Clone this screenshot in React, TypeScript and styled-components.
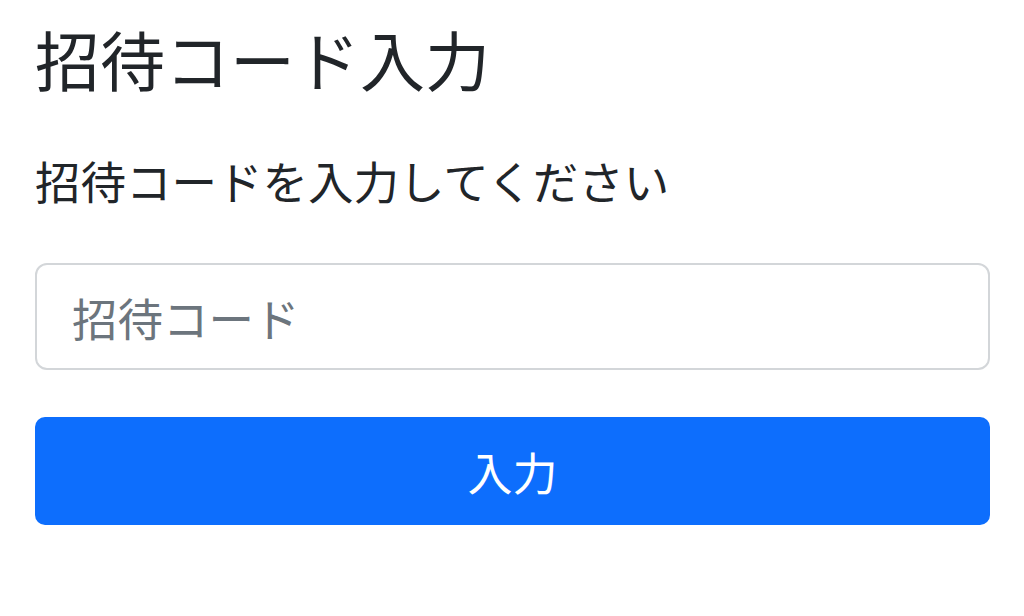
import React from "react";
import styled, { createGlobalStyle } from "styled-components";

const GlobalStyle = createGlobalStyle`
    body {
        margin: 0;
        background: #ffffff;
        font-family: "Noto Sans CJK JP", "Noto Sans", sans-serif;
        color: #212529;
    }
`

export default function App() {
    return (
        <>
            <GlobalStyle />
            <Page>
                <Title>招待コード入力</Title>
                <Lead>招待コードを入力してください</Lead>
                <CodeInput type="text" placeholder="招待コード" />
                <SubmitButton type="button">入力</SubmitButton>
            </Page>
        </>
    )
}

const Page = styled.div`
    display: flex;
    flex-direction: column;
    padding: 19px 34px 0 35px;
`

const Title = styled.h1`
    margin: 0;
    font-size: 65px;
    font-weight: 400;
    line-height: 1.2;
    color: #212529;
`

const Lead = styled.p`
    margin: 49px 0 0 0;
    font-size: 45.5px;
    line-height: 1.5;
    color: #212529;
`

const CodeInput = styled.input`
    box-sizing: border-box;
    margin-top: 49px;
    width: 100%;
    height: 107px;
    padding: 0 35px;
    border: 2px solid #d3d6d9;
    border-radius: 12px;
    font-family: "Noto Sans CJK JP", "Noto Sans", sans-serif;
    font-size: 45.5px;
    color: #212529;
    background: #ffffff;
    outline: none;

    &::placeholder {
        color: #6c757d;
    }
`

const SubmitButton = styled.button`
    box-sizing: border-box;
    margin-top: 47px;
    width: 100%;
    height: 108px;
    border: none;
    border-radius: 10px;
    background-color: #0d6efd;
    color: #ffffff;
    font-family: "Noto Sans CJK JP", "Noto Sans", sans-serif;
    font-size: 45px;
    cursor: pointer;
`
